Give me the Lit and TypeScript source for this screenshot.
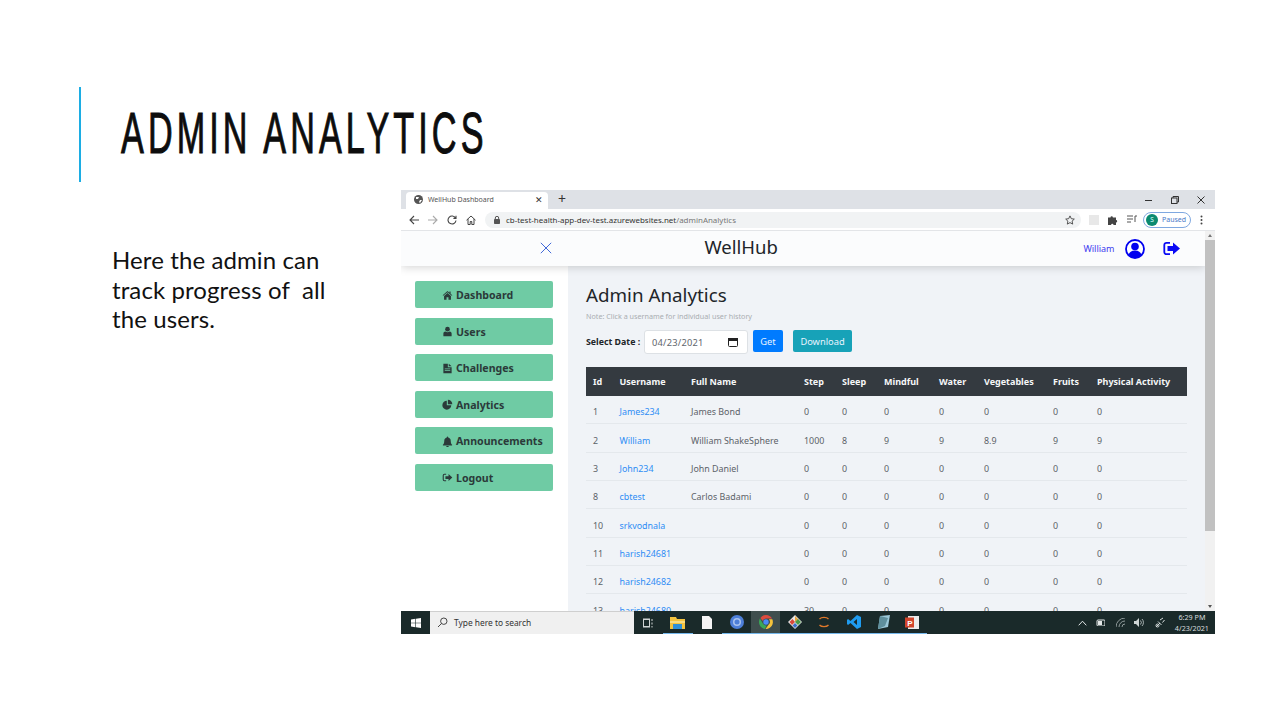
import { LitElement, html, css, svg } from 'lit';
import { customElement } from 'lit/decorators.js';

type Row = [string, string, string, string, string, string, string, string, string, string];

const HEADERS = ['Id', 'Username', 'Full Name', 'Step', 'Sleep', 'Mindful', 'Water', 'Vegetables', 'Fruits', 'Physical Activity'];

const ROWS: Row[] = [
    ['1', 'James234', 'James Bond', '0', '0', '0', '0', '0', '0', '0'],
    ['2', 'William', 'William ShakeSphere', '1000', '8', '9', '9', '8.9', '9', '9'],
    ['3', 'John234', 'John Daniel', '0', '0', '0', '0', '0', '0', '0'],
    ['8', 'cbtest', 'Carlos Badami', '0', '0', '0', '0', '0', '0', '0'],
    ['10', 'srkvodnala', '', '0', '0', '0', '0', '0', '0', '0'],
    ['11', 'harish24681', '', '0', '0', '0', '0', '0', '0', '0'],
    ['12', 'harish24682', '', '0', '0', '0', '0', '0', '0', '0'],
    ['13', 'harish24680', '', '30', '0', '0', '0', '0', '0', '0'],
];

const NAV_ICONS = {
    home: svg`<path d="M8 1.5 1 7.6l.8.9L8 3.2l6.2 5.3.8-.9-2.5-2.2V2h-1.7v2L8 1.5Zm0 3L3 8.7V14h3.6v-3.6h2.8V14H13V8.7L8 4.5Z"/>`,
    user: svg`<circle cx="8" cy="4.6" r="3.4"/><path d="M2 14.6V11c0-1.8 1.4-3 3-3 .8.6 1.8 1 3 1s2.2-.4 3-1c1.6 0 3 1.2 3 3v3.6c0 .3-.2.4-.4.4H2.400c-.2 0-.4-.1-.4-.4Z"/>`,
    file: svg`<path d="M2 1h6.500v5H14v9H2V1Zm7.800 0L14 4.900H9.800V1ZM4 8v1.200h8V8H4Zm0 2.600v1.200h8v-1.200H4Z"/>`,
    pie: svg`<path d="M7 2.500A6.500 6.500 0 1 0 13.500 9H7V2.500Z"/><path d="M8.500 1V7.500H15A6.500 6.500 0 0 0 8.500 1Z"/>`,
    bell: svg`<path d="M8 .8c-.6 0-1 .4-1 1v.5C4.700 2.800 3.300 4.600 3.300 7c0 3.600-1 4.800-2 5.800v.9h13.400v-.9c-1-1-2-2.200-2-5.800 0-2.400-1.400-4.200-3.700-4.700v-.5c0-.6-.4-1-1-1ZM6.200 14.400a1.800 1.800 0 0 0 3.600 0H6.200Z"/>`,
    logout: svg`<path d="M6 2.500H3.500A2.500 2.500 0 0 0 1 5v6a2.500 2.500 0 0 0 2.500 2.500H6v-1.600H3.500a.9.9 0 0 1-.9-.9V5c0-.5.4-.9.9-.9H6V2.500Z"/><path d="M9.500 3 15 8l-5.500 5v-3H5V6h4.500V3Z"/>`,
};

const NAV = [
    { label: 'Dashboard', icon: NAV_ICONS.home },
    { label: 'Users', icon: NAV_ICONS.user },
    { label: 'Challenges', icon: NAV_ICONS.file },
    { label: 'Analytics', icon: NAV_ICONS.pie },
    { label: 'Announcements', icon: NAV_ICONS.bell },
    { label: 'Logout', icon: NAV_ICONS.logout },
];

@customElement('app-root')
export class AppRoot extends LitElement {
    static styles = css`
    :host {
      display: block;
      width: 1280px;
      height: 720px;
      background: #fff;
      overflow: hidden;
      font-family: "Noto Sans", "Open Sans", sans-serif;
    }

    .header {
      margin: 87px 0 8px 79px;
      border-left: 2px solid #1cade4;
      display: flex;
      align-items: center;
      padding-left: 40px;
      padding-bottom: 2px;
      height: 93px;
    }

    .slide-title {
      margin: 0;
      font: 400 57px/1 "Liberation Sans", sans-serif;
      color: #0d0d0d;
      -webkit-text-stroke: 1px #0d0d0d;
      letter-spacing: 6.800px;
      white-space: nowrap;
      transform: scaleX(0.6);
      transform-origin: left center;
    }

    .body {
      display: flex;
      align-items: flex-start;
    }

    .blurb {
      width: 401px;
      flex: none;
      box-sizing: border-box;
      padding: 55px 40px 0 112px;
      margin: 0;
      font: 400 24px/29.500px Lato, sans-serif;
      letter-spacing: 0.1px;
      color: #111;
      white-space: nowrap;
    }

    .browser {
      width: 814px;
      height: 444px;
      display: flex;
      flex-direction: column;
      overflow: hidden;
    }

    .tabbar {
      height: 19px;
      flex: none;
      background: #dee1e6;
      display: flex;
      align-items: flex-end;
      font-size: 7px;
      color: #555;
    }

    .tab {
      width: 142px;
      height: 17px;
      margin-left: 5px;
      background: #fff;
      border-radius: 4px 4px 0 0;
      display: flex;
      align-items: center;
      gap: 5px;
      padding: 0 5px 3px 8px;
      box-sizing: border-box;
    }

    .tab span { flex: 1; }
    .tab-close { font-size: 9px; color: #333; flex: none !important; }

    .new-tab {
      margin: 0 0 2px 10px;
      font-size: 14px;
      line-height: 17px;
      color: #333;
    }

    .win-controls {
      margin-left: auto;
      display: flex;
      align-items: center;
      gap: 18px;
      height: 19px;
      padding-right: 10px;
      color: #333;
    }

    .toolbar {
      height: 22px;
      flex: none;
      background: #fff;
      border-bottom: 1px solid #e3e5e8;
      box-sizing: border-box;
      display: flex;
      align-items: center;
      padding: 0 8px 0 8px;
      gap: 9px;
    }

    .omnibox {
      width: 596px;
      height: 16px;
      background: #f1f3f4;
      border-radius: 8px;
      display: flex;
      align-items: center;
      gap: 4px;
      padding: 0 6px 0 9px;
      box-sizing: border-box;
      font-size: 7.950px;
      color: #333;
      white-space: nowrap;
    }

    .omnibox em { font-style: normal; color: #777; }
    .omnibox .star { margin-left: auto; }
    .url { margin-left: 2px; }

    .ext-box { width: 10px; height: 10px; background: #e8e8e8; margin-left: -1px; }

    .paused {
      width: 48px;
      height: 16px;
      margin-left: -3px;
      border: 1px solid #7fa8e0;
      border-radius: 8px;
      box-sizing: border-box;
      display: flex;
      align-items: center;
      gap: 4px;
      padding-left: 2px;
      font-size: 7px;
      color: #4a78c8;
    }

    .avatar {
      width: 12px;
      height: 12px;
      border-radius: 50%;
      background: #0b8a70;
      color: #dff;
      font-size: 6.500px;
      display: flex;
      align-items: center;
      justify-content: center;
    }

    .viewport {
      flex: 1;
      min-height: 0;
      display: flex;
      overflow: hidden;
    }

    .page {
      flex: 1;
      min-width: 0;
      display: flex;
      flex-direction: column;
      overflow: hidden;
    }

    .navbar {
      height: 35px;
      flex: none;
      background: #fbfcfd;
      box-shadow: 0 1px 9px rgba(0, 0, 0, 0.18);
      position: relative;
      display: grid;
      grid-template-columns: 139px 12px 1fr auto;
      align-items: center;
      z-index: 1;
    }

    .toggle { grid-column: 2; display: flex; margin-bottom: 2px; }

    .brand {
      font-size: 18.500px;
      font-weight: 400;
      color: #212529;
      text-align: center;
      padding-right: 153px;
      margin-bottom: 5px;
    }

    .nav-user {
      display: flex;
      align-items: center;
      padding-right: 25px;
      color: #3b3bf0;
      font-size: 9px;
    }

    .nav-user span { margin-right: 10px; }
    .nav-user svg + svg { margin-left: 18.500px; }

    .main {
      flex: 1;
      min-height: 0;
      display: flex;
      overflow: hidden;
    }

    .sidebar {
      width: 167px;
      flex: none;
      background: #fff;
      box-sizing: border-box;
      padding: 15px 15px 0 14px;
      display: flex;
      flex-direction: column;
      gap: 9.500px;
    }

    .nav-btn {
      height: 27px;
      flex: none;
      background: #6fcba4;
      border-radius: 2px;
      display: flex;
      align-items: center;
      gap: 3px;
      padding: 1px 0 0 27px;
      font-size: 10.600px;
      font-weight: 700;
      color: #2b3a3a;
      box-sizing: border-box;
    }

    .content {
      flex: 1;
      min-width: 0;
      background: #f0f3f7;
      padding: 16px 18px 0 18px;
      overflow: hidden;
    }

    .content h1 {
      margin: 0;
      font-size: 18.800px;
      line-height: 26px;
      font-weight: 400;
      color: #212529;
    }

    .note {
      font-size: 7.200px;
      line-height: 10px;
      margin-top: 3px;
      color: #a9adb1;
    }

    .filter {
      display: flex;
      align-items: flex-start;
      margin-top: 9px;
      height: 37px;
    }

    .filter label {
      font-size: 8.800px;
      font-weight: 700;
      color: #212529;
      line-height: 24px;
      width: 58px;
      flex: none;
      white-space: nowrap;
    }

    .date {
      width: 104px;
      height: 24px;
      background: #fff;
      border: 1px solid #dde1e5;
      border-radius: 3px;
      box-sizing: border-box;
      display: flex;
      align-items: center;
      justify-content: space-between;
      padding: 0 9px 0 7px;
      font-size: 9.300px;
      letter-spacing: 0.2px;
      color: #5f666d;
    }

    .btn {
      height: 22px;
      border-radius: 2px;
      color: #e8f4ff;
      font-size: 9.300px;
      display: flex;
      align-items: center;
      justify-content: center;
      flex: none;
    }

    .btn-get { width: 30px; margin-left: 5px; background: #007bff; }
    .btn-download { width: 59px; margin-left: 10px; background: #17a2b8; }

    .table { width: 601px; }

    .tr {
      display: grid;
      grid-template-columns: 26.500px 71.500px 113px 38px 42px 55px 45px 69px 44px 97px;
      height: 28.350px;
      padding-top: 4px;
      align-items: center;
      border-bottom: 1px solid #e4e8ec;
      box-sizing: border-box;
      font-size: 8.900px;
      color: #5c6268;
    }

    .tr > div { padding-left: 7px; white-space: nowrap; }

    .tr.head {
      height: 29px;
      padding-top: 0;
      background: #343a40;
      border-bottom: none;
      font-size: 9px;
      color: #f6f7f8;
      font-weight: 700;
    }

    .tr a { color: #2e8df5; text-decoration: none; }

    .scrollbar {
      width: 10px;
      flex: none;
      background: #f1f1f1;
      position: relative;
      display: flex;
      flex-direction: column;
      align-items: center;
    }

    .arrow-up, .arrow-down {
      width: 0;
      height: 0;
      border-left: 2.500px solid transparent;
      border-right: 2.500px solid transparent;
      flex: none;
    }

    .arrow-up { border-bottom: 3px solid #777; margin: 3px 0; }
    .arrow-down { border-top: 3px solid #555; margin: auto 0 3px; }

    .thumb {
      width: 100%;
      height: 291px;
      background: #c1c1c1;
      flex: none;
    }

    .taskbar {
      height: 23px;
      flex: none;
      background: #1a2a2a;
      display: flex;
      align-items: center;
    }

    .start {
      width: 29px;
      height: 100%;
      display: flex;
      align-items: center;
      justify-content: center;
      flex: none;
    }

    .search {
      width: 204px;
      height: 100%;
      background: #f0f0f0;
      border-top: 1px solid #cfcfcf;
      box-sizing: border-box;
      display: flex;
      align-items: center;
      gap: 6px;
      padding: 0 0 1px 7px;
      font-size: 8.400px;
      color: #333;
      flex: none;
    }

    .task-icons {
      display: flex;
      height: 100%;
      flex: none;
    }

    .task {
      width: 29.300px;
      height: 100%;
      display: flex;
      align-items: center;
      justify-content: center;
      box-sizing: border-box;
      flex: none;
    }

    .task.running { border-bottom: 1.500px solid #76b9ed; }
    .task.active { background: #3f4e4e; border-bottom: 1.500px solid #76b9ed; }

    .tray {
      margin-left: auto;
      display: flex;
      align-items: center;
      gap: 8px;
      padding-right: 6px;
      color: #d8dede;
    }

    .tray .wifi { margin-left: 3px; }
    .tray .pen { margin-left: 3px; }

    .clock {
      margin-left: 2px;
      text-align: center;
      font-size: 7.200px;
      line-height: 11px;
      color: #d8dede;
    }
  `;

    private renderCell(row: Row, i: number) {
        return i === 1 ? html`<div><a href="#">${row[i]}</a></div>` : html`<div>${row[i]}</div>`;
    }

    private renderTaskbar() {
        return html`
      <div class="taskbar">
        <div class="start">
          <svg width="10" height="10" viewBox="0 0 10 10" fill="#fff"><path d="M0 1.400 4.400.8v3.900H0V1.400Zm5 -.7L10 0v4.700H5V.7ZM0 5.300h4.400v3.900L0 8.600V5.300Zm5 0h5V10l-5-.7V5.300Z"/></svg>
        </div>
        <div class="search">
          <svg width="11" height="11" viewBox="0 0 11 11" fill="none" stroke="#333" stroke-width="0.900"><circle cx="6.800" cy="4.200" r="3.200"/><path d="M4.500 6.500 1 10"/></svg>
          Type here to search
        </div>
        <div class="task-icons">
          <div class="task">
            <svg width="11" height="10" viewBox="0 0 11 10" fill="none" stroke="#cfd4d4"><rect x="0.500" y="1.500" width="6" height="7"/><path d="M0 0h7M0 10h7M9 1v2M9 4.500v2M9 8v1.500"/></svg>
          </div>
          <div class="task running">
            <svg width="15" height="13" viewBox="0 0 15 13"><path d="M0 1h6l1 2h8v10H0V1Z" fill="#f4c33f"/><rect x="0" y="5" width="15" height="2" fill="#f9dc83"/><rect x="3" y="8" width="9" height="5" fill="#2f8fd8"/></svg>
          </div>
          <div class="task">
            <svg width="10" height="13" viewBox="0 0 10 13"><path d="M0 0h7l3 3v10H0V0Z" fill="#f4f4f4"/></svg>
          </div>
          <div class="task running">
            <svg width="14" height="14" viewBox="0 0 14 14"><circle cx="7" cy="7" r="7" fill="#4d7fd8"/><circle cx="7" cy="7" r="4" fill="#a9c3ee"/><circle cx="7" cy="7" r="2.500" fill="#4d7fd8"/></svg>
          </div>
          <div class="task active">
            <svg width="14" height="14" viewBox="0 0 14 14"><path d="M7 0a7 7 0 0 1 6.100 3.500H7A3.500 3.500 0 0 0 3.700 6L1.400 2.900A7 7 0 0 1 7 0Z" fill="#dd4b3e"/><path d="M13.300 4.200A7 7 0 0 1 6.500 14l3.200-4.500a3.500 3.500 0 0 0 .2-5.300h3.400Z" fill="#f5c33b"/><path d="M.9 3.600 4 8.700a3.500 3.500 0 0 0 3.700 1.700L5.700 13.900A7 7 0 0 1 .9 3.600Z" fill="#3aa757"/><circle cx="7" cy="7" r="2.700" fill="#4a8af4"/></svg>
          </div>
          <div class="task running">
            <svg width="14" height="14" viewBox="0 0 14 14"><path d="M7 0l7 7-7 7-7-7 7-7Z" fill="#e8e8e8"/><path d="M7 1 10.500 4.500 7 7Z" fill="#e8a33a"/><path d="M1.500 7 4.500 4 7 7 4 10Z" fill="#d9483b"/><path d="M7 7 10 4l3 3-3 3Z" fill="#4a9a4a"/><path d="M4.500 10.500 7 8l2.500 2.500L7 13Z" fill="#3b6fc9"/></svg>
          </div>
          <div class="task running">
            <svg width="12" height="14" viewBox="0 0 12 14" fill="none" stroke="#e0782a" stroke-width="1.300"><path d="M1.500 4C3.500 1.800 8.500 1.800 10.500 4M1.500 10c2 2.200 7 2.200 9 0"/></svg>
          </div>
          <div class="task running">
            <svg width="14" height="14" viewBox="0 0 14 14"><path d="M10 0 14 2v10l-4 2L3.500 8 1 10 0 9V5l1-1 2.500 2L10 0Zm0 4L6.500 7 10 10V4Z" fill="#1f9cf0"/></svg>
          </div>
          <div class="task running">
            <svg width="14" height="14" viewBox="0 0 14 14"><path d="M4 1 14 0l-2 12-10 2L4 1Z" fill="#9cc8d8"/><path d="M4 1l8 2-3 8-7 3L4 1Z" fill="#5f8f9c"/></svg>
          </div>
          <div class="task running">
            <svg width="14" height="13" viewBox="0 0 14 13"><rect x="3" y="0" width="11" height="13" fill="#ececec"/><rect x="0" y="1.500" width="9" height="10" fill="#d2452b"/><text x="2.200" y="9.500" font-size="8" font-weight="700" fill="#fff" font-family="Liberation Sans">P</text></svg>
          </div>
        </div>
        <div class="tray">
          <svg width="9" height="6" viewBox="0 0 9 6" fill="none" stroke="#e4e8e8"><path d="M.7 5.300 4.500 1.200l3.800 4.100"/></svg>
          <svg width="10" height="7" viewBox="0 0 10 7" fill="#e4e8e8"><rect x="2" y="1" width="8" height="6" rx="1" fill="none" stroke="#e4e8e8"/><rect x="3" y="2" width="4" height="4"/></svg>
          <svg class="wifi" width="10" height="9" viewBox="0 0 10 9" fill="none" stroke="#8f9a9a"><path d="M0 9a9 9 0 0 1 9-9M3 9a6 6 0 0 1 6-6M6 9a3 3 0 0 1 3-3"/></svg>
          <svg width="10" height="9" viewBox="0 0 10 9" fill="#cfd6d6"><path d="M0 3h2l3-3v9L2 6H0V3Z"/><path d="M6.500 2.500a3 3 0 0 1 0 4M8 1a5 5 0 0 1 0 7" fill="none" stroke="#cfd6d6" stroke-width="0.800"/></svg>
          <svg class="pen" width="10" height="11" viewBox="0 0 10 11" fill="none" stroke="#d8dede"><path d="M1 10 5 6M3 4.500 6.500 8M5 3l3-2M7.500 5.500 9.500 3"/><circle cx="2.500" cy="8.500" r="1.500"/></svg>
          <div class="clock">6:29 PM<br />4/23/2021</div>
        </div>
      </div>
    `;
    }

    render() {
        return html`
      <div class="header"><h2 class="slide-title">ADMIN ANALYTICS</h2></div>
      <div class="body">
        <p class="blurb">Here the admin can<br />track progress of&nbsp; all<br />the users.</p>
        <div class="browser">
          <div class="tabbar">
            <div class="tab">
              <svg width="9" height="9" viewBox="0 0 9 9"><circle cx="4.500" cy="4.500" r="4.500" fill="#555"/><path d="M2 2h3L4 4 2 4Zm4 3 2 0-2 3-1-1Z" fill="#fff"/></svg>
              <span>WellHub Dashboard</span>
              <span class="tab-close">✕</span>
            </div>
            <div class="new-tab">+</div>
            <div class="win-controls">
              <svg width="8" height="8" viewBox="0 0 8 8" stroke="#333" fill="none"><path d="M0 4.500h7"/></svg>
              <svg width="8" height="8" viewBox="0 0 8 8" stroke="#333" fill="none"><rect x="0.500" y="2" width="5.500" height="5.500"/><path d="M2 2V.5h5.500V6H6"/></svg>
              <svg width="8" height="8" viewBox="0 0 8 8" stroke="#333" fill="none"><path d="M.5.500l7 7M7.500.500l-7 7"/></svg>
            </div>
          </div>
          <div class="toolbar">
            <svg width="10" height="10" viewBox="0 0 10 10" fill="none" stroke="#444" stroke-width="1.100"><path d="M10 5H1M5 1 1 5l4 4"/></svg>
            <svg width="10" height="10" viewBox="0 0 10 10" fill="none" stroke="#aaa" stroke-width="1.100"><path d="M0 5h9M5 1l4 4-4 4"/></svg>
            <svg width="10" height="10" viewBox="0 0 10 10" fill="none" stroke="#444" stroke-width="1.100"><path d="M8.500 3A4 4 0 1 0 9 5.500M9 .8V3.400H6.400"/></svg>
            <svg width="10" height="10" viewBox="0 0 10 10" fill="none" stroke="#444"><path d="M.5 5.200 5 1l4.500 4.200M2 4v5.500h2.200V6.500h1.600v3H8V4"/></svg>
            <div class="omnibox">
              <svg width="6" height="8" viewBox="0 0 6 8" fill="#555"><rect y="3" width="6" height="5" rx="0.800"/><path d="M1.300 3V2a1.700 1.700 0 0 1 3.400 0v1" fill="none" stroke="#555"/></svg>
              <span class="url">cb-test-health-app-dev-test.azurewebsites.net<em>/adminAnalytics</em></span>
              <svg class="star" width="10" height="10" viewBox="0 0 10 10" fill="none" stroke="#444" stroke-width="0.900"><path d="m5 .9 1.300 2.800 3 .4-2.200 2 .6 3L5 7.600 2.300 9.100l.6-3-2.200-2 3-.4L5 .9Z"/></svg>
            </div>
            <div class="ext-box"></div>
            <svg width="10" height="10" viewBox="0 0 10 10" fill="#444"><path d="M0 2.500h2.500a1.200 1.200 0 0 1 2.400 0H8V5a1.200 1.200 0 0 1 0 2.400V10H5.500a1.200 1.200 0 0 0-2.400 0H0V2.500Z"/></svg>
            <svg width="10" height="9" viewBox="0 0 10 9" fill="none" stroke="#555"><path d="M0 1h6M0 4h6M0 7h4M8 1v6M8 1h2"/></svg>
            <div class="paused"><div class="avatar">S</div>Paused</div>
            <svg width="3" height="10" viewBox="0 0 3 10" fill="#444"><circle cx="1.500" cy="1.500" r="1"/><circle cx="1.500" cy="5" r="1"/><circle cx="1.500" cy="8.500" r="1"/></svg>
          </div>
          <div class="viewport">
            <div class="page">
              <div class="navbar">
                <div class="toggle">
                  <svg width="12" height="12" viewBox="0 0 12 12" fill="none" stroke="#4169d8" stroke-width="1"><path d="m.8.800 10.400 10.400M11.200.800.8 11.200"/></svg>
                </div>
                <div class="brand">WellHub</div>
                <div class="nav-user">
                  <span>William</span>
                  <svg width="20" height="20" viewBox="0 0 20 20"><circle cx="10" cy="10" r="9" fill="#fff" stroke="#0000f0" stroke-width="1.800"/><circle cx="10" cy="7.500" r="3.800" fill="#0000f0"/><path d="M3.500 16c.8-3 3-4.500 6.500-4.500s5.700 1.500 6.500 4.500a9 9 0 0 1-13 0Z" fill="#0000f0"/></svg>
                  <svg width="17" height="15" viewBox="0 0 17 15"><path d="M7 1.800H3.500A2.200 2.200 0 0 0 1.300 4v7a2.200 2.200 0 0 0 2.200 2.200H7" fill="none" stroke="#0a0af5" stroke-width="1.800"/><path d="M10 1.500 17 7.500 10 13.500V10H4.500V5H10V1.500Z" fill="#0a0af5"/></svg>
                </div>
              </div>
              <div class="main">
                <div class="sidebar">
                  ${NAV.map(n => html`
                    <div class="nav-btn">
                      <svg width="11" height="11" viewBox="0 0 16 16" fill="#2b3a3a">${n.icon}</svg>
                      ${n.label}
                    </div>
                  `)}
                </div>
                <div class="content">
                  <h1>Admin Analytics</h1>
                  <div class="note">Note: Click a username for individual user history</div>
                  <div class="filter">
                    <label>Select Date :</label>
                    <div class="date">
                      04/23/2021
                      <svg width="10" height="10" viewBox="0 0 10 10" fill="none" stroke="#222"><rect x="0.500" y="1.500" width="9" height="8" rx="1"/><rect x="0.500" y="1.500" width="9" height="2" fill="#222"/></svg>
                    </div>
                    <div class="btn btn-get">Get</div>
                    <div class="btn btn-download">Download</div>
                  </div>
                  <div class="table">
                    <div class="tr head">${HEADERS.map(h => html`<div>${h}</div>`)}</div>
                    ${ROWS.map(r => html`<div class="tr">${r.map((_, i) => this.renderCell(r, i))}</div>`)}
                  </div>
                </div>
              </div>
            </div>
            <div class="scrollbar">
              <div class="arrow-up"></div>
              <div class="thumb"></div>
              <div class="arrow-down"></div>
            </div>
          </div>
          ${this.renderTaskbar()}
        </div>
      </div>
    `;
    }
}
